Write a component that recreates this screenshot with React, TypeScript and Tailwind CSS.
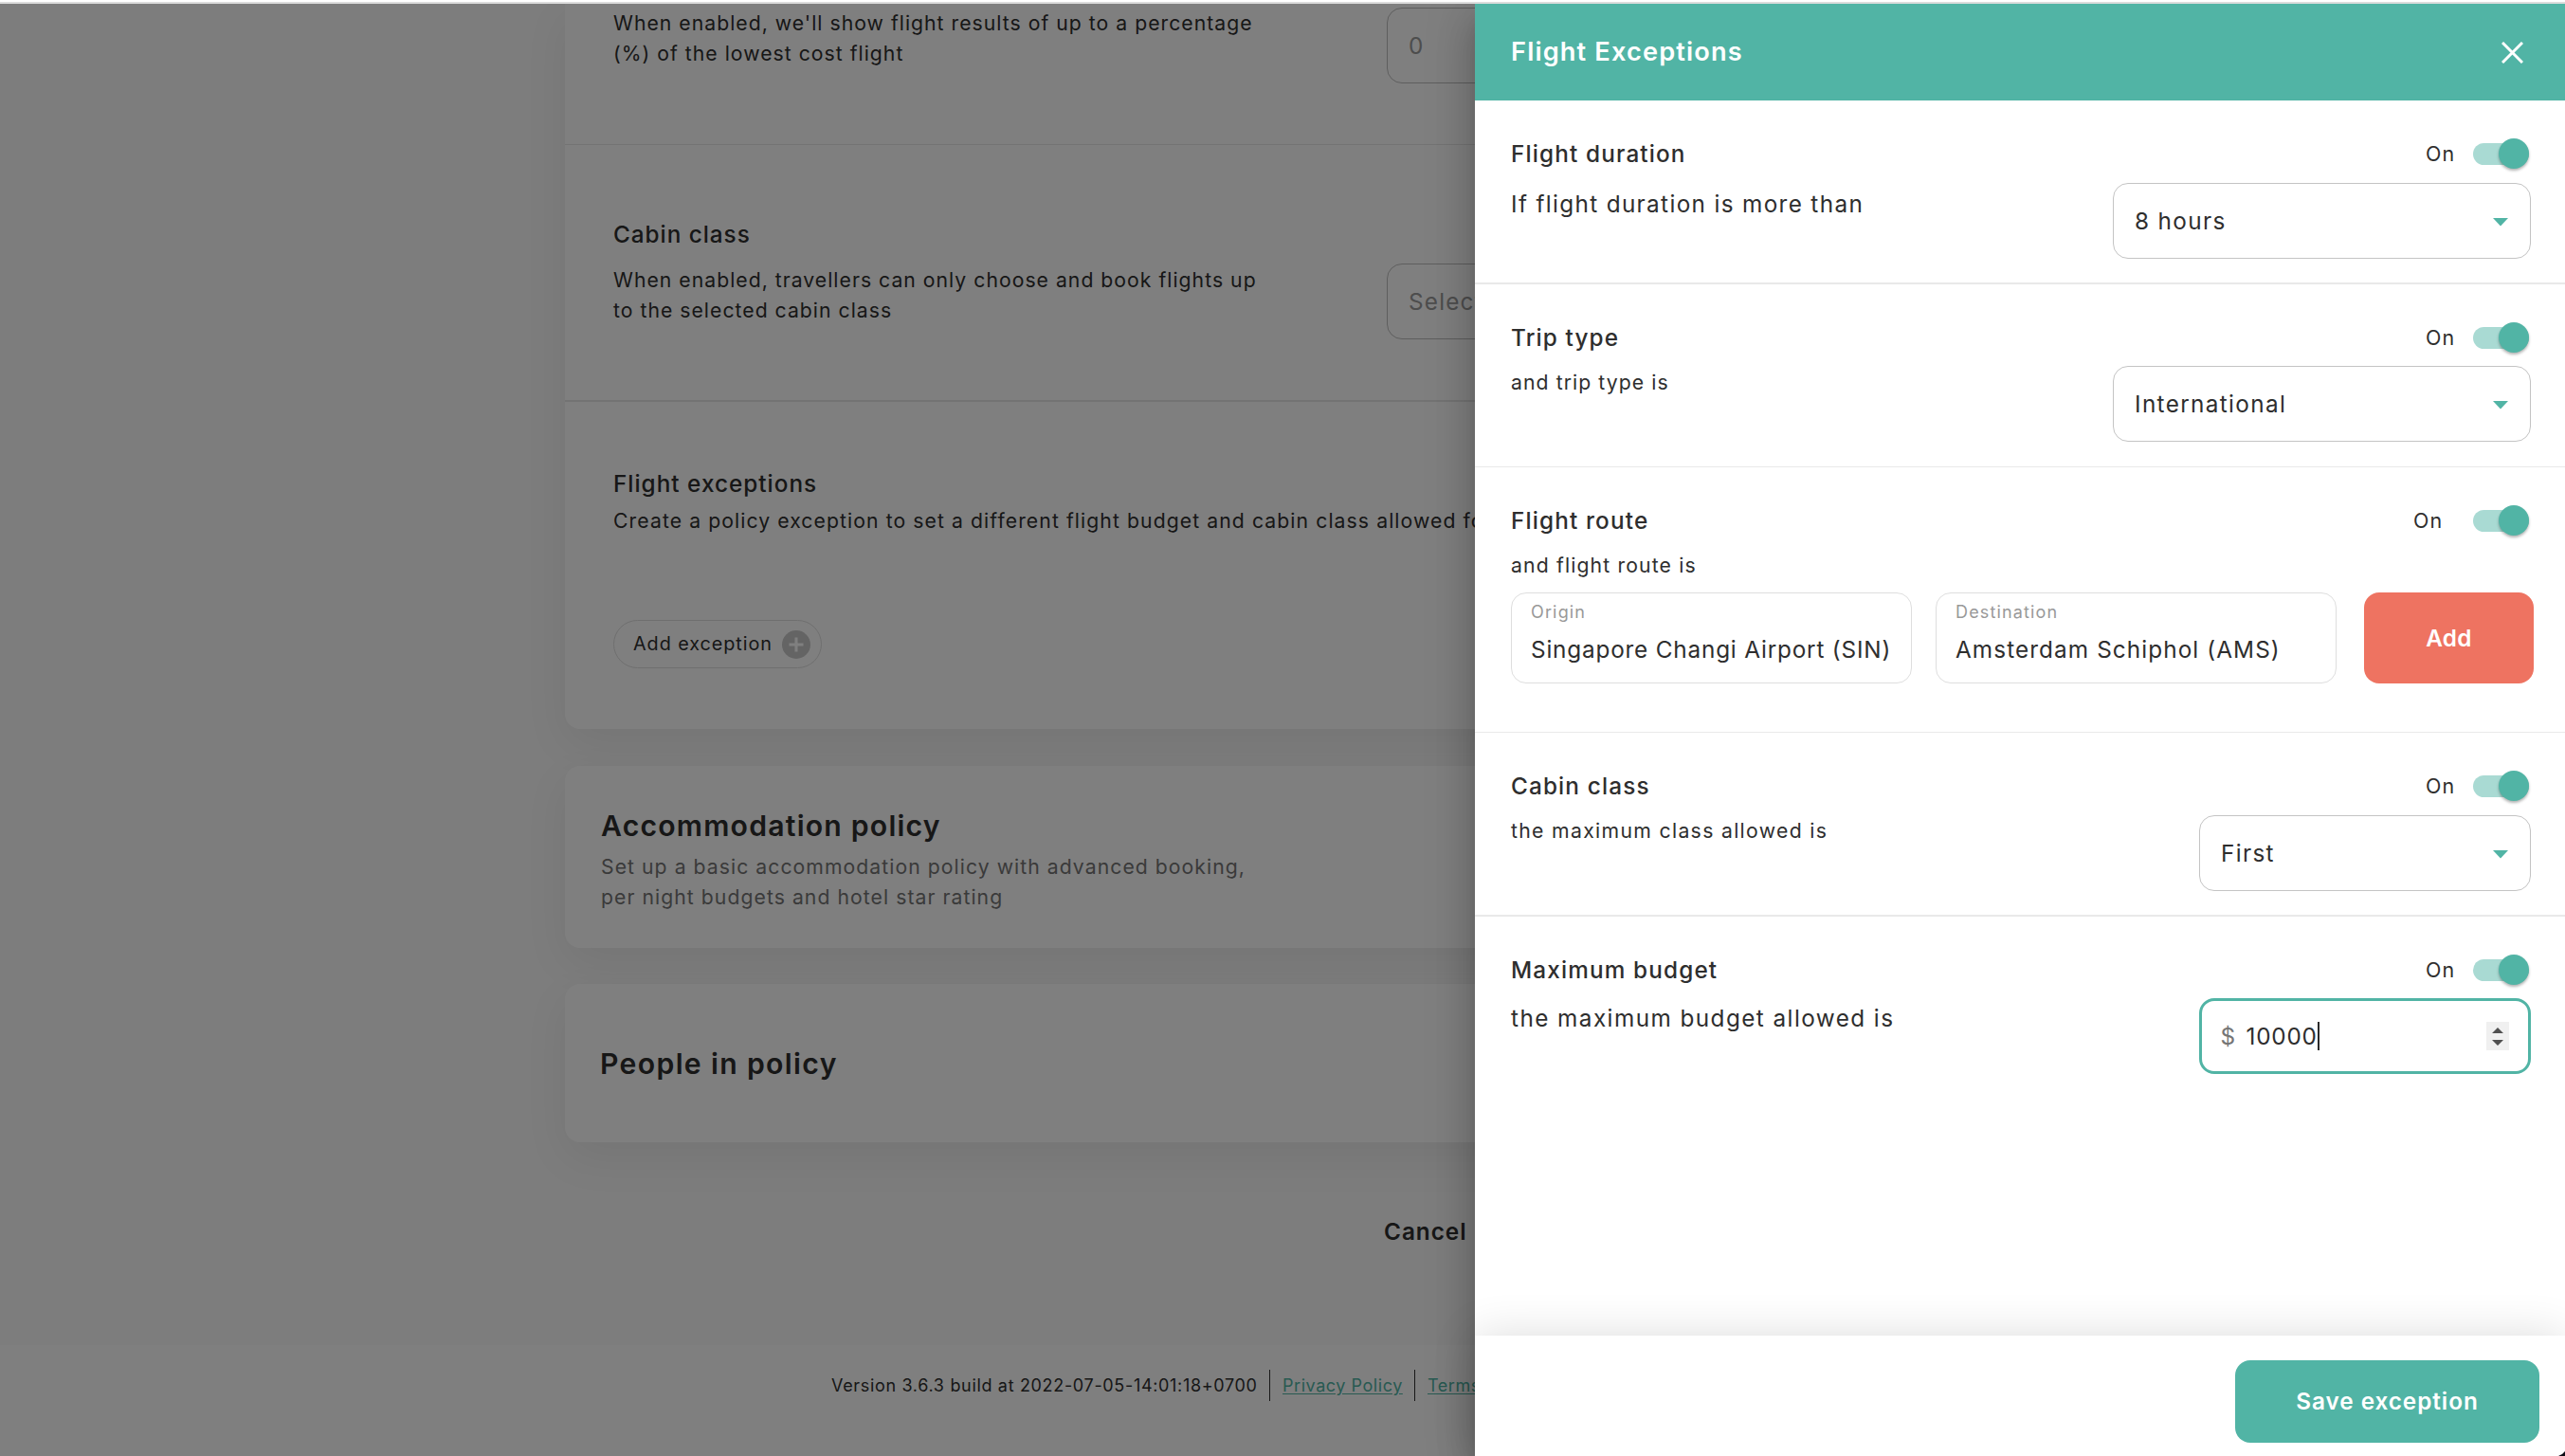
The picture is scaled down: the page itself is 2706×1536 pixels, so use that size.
import type { ReactNode } from 'react';

function Toggle({ wide = false }: { wide?: boolean }) {
  return (
    <div className="flex h-8 items-center pr-0.5">
      <span
        className={
          wide
            ? 'w-[63px] text-[21.4px] leading-8 tracking-[1.1px]'
            : 'w-[50px] text-[21.4px] leading-8 tracking-[1.1px]'
        }
      >
        On
      </span>
      <span className="flex h-[23px] w-[59px] items-center justify-end rounded-full bg-[#a9dad3]">
        <span className="size-8 shrink-0 rounded-full bg-[#51b4a5] shadow-[0_2px_3px_rgba(0,0,0,0.3)]" />
      </span>
    </div>
  );
}

function Select({ value, className }: { value: string; className: string }) {
  return (
    <div
      className={`flex h-20 items-center justify-between rounded-2xl border border-[#c4c4c4] pr-[23px] pl-[22px] ${className}`}
    >
      <span className="text-[24.3px] leading-8 tracking-[1.35px]">{value}</span>
      <svg className="mt-0.5 h-[9px] w-4" viewBox="0 0 16 9">
        <path d="M0 0h16L8 8.5z" fill="#51b4a5" />
      </svg>
    </div>
  );
}

function Place({ label, value, tracking }: { label: string; value: string; tracking: string }) {
  return (
    <div className="flex h-24 w-[423px] shrink-0 flex-col rounded-2xl border border-[#dedede] pt-2 pl-5 whitespace-nowrap">
      <span className="text-[18px] leading-6 tracking-[1.15px] text-[#999999]">{label}</span>
      <span className={`mt-[11px] text-[24.3px] leading-8 ${tracking}`}>{value}</span>
    </div>
  );
}

function Title({ children }: { children: ReactNode }) {
  return <h3 className="text-[24.3px] leading-8 font-medium tracking-[1.15px]">{children}</h3>;
}

function Card({ children, className }: { children: ReactNode; className: string }) {
  return (
    <section className={`bg-white shadow-[0_16px_48px_rgba(0,0,0,0.065)] ${className}`}>
      {children}
    </section>
  );
}

function PolicyPage() {
  return (
    <div className="flex h-full flex-col bg-[#fafafa] whitespace-nowrap">
      <main className="ml-[596px] flex h-[1415px] w-[1514px] shrink-0 flex-col">
        <Card className="flex h-[765px] shrink-0 flex-col rounded-b-2xl">
          <div className="flex h-[149px] justify-between border-b border-[#e6e6e6] pt-1 pr-12 pl-[51px]">
            <p className="text-[21.2px] leading-8 tracking-[1.02px]">
              When enabled, we&apos;ll show flight results of up to a percentage
              <br />
              (%) of the lowest cost flight
            </p>
            <div className="flex h-20 w-[599px] items-center rounded-2xl border border-[#bdbdbd] pl-[22px] text-[24.3px] text-[#9a9a9a]">
              0
            </div>
          </div>
          <div className="flex h-[271px] justify-between border-b-2 border-[#e6e6e6] pt-[78px] pr-12 pl-[51px]">
            <div>
              <h3 className="text-[24.3px] leading-8 font-medium tracking-[0.98px]">Cabin class</h3>
              <p className="mt-4 text-[21.2px] leading-8 tracking-[1.02px]">
                When enabled, travellers can only choose and book flights up
                <br />
                to the selected cabin class
              </p>
            </div>
            <div className="mt-[47px] flex h-20 w-[599px] items-center rounded-2xl border border-[#bdbdbd] pl-[22px] text-[24.3px] tracking-[1.2px] text-[#9a9a9a]">
              Select
            </div>
          </div>
          <div className="flex flex-col items-start pt-[70px] pl-[51px]">
            <h3 className="text-[24.3px] leading-8 font-medium tracking-[1.02px]">Flight exceptions</h3>
            <p className="mt-[7px] text-[21.2px] leading-8 tracking-[1.08px]">
              Create a policy exception to set a different flight budget and cabin class allowed for
            </p>
            <button className="mt-[89px] flex h-[51px] w-[220px] items-center justify-between rounded-full border border-[#dedede] pr-[11px] pl-5 text-[19.8px] tracking-[0.95px]">
              Add exception
              <svg className="size-[30px]" viewBox="0 0 30 30">
                <circle cx="15" cy="15" r="15" fill="#c8c8c8" />
                <path d="M15 7.5v15M7.5 15h15" stroke="#fff" strokeWidth="3" />
              </svg>
            </button>
          </div>
        </Card>
        <Card className="mt-[39px] h-48 shrink-0 rounded-2xl pt-[47px] pl-[38px]">
          <h2 className="text-[30.2px] leading-8 font-semibold tracking-[1.2px]">Accommodation policy</h2>
          <p className="mt-[11px] text-[21.2px] leading-8 tracking-[1.05px] text-[#757575]">
            Set up a basic accommodation policy with advanced booking,
            <br />
            per night budgets and hotel star rating
          </p>
        </Card>
        <Card className="mt-[38px] flex h-[167px] shrink-0 items-center rounded-2xl pl-[37px]">
          <h2 className="text-[30.2px] leading-8 font-semibold tracking-[1.33px]">People in policy</h2>
        </Card>
        <button className="mt-[78px] ml-[864px] w-fit text-[24.3px] leading-8 font-semibold tracking-[1px]">
          Cancel
        </button>
      </main>
      <footer className="flex h-[116px] shrink-0 items-start bg-white pt-[26px] pl-[877px] text-[18px] leading-[33px]">
        <span className="w-[462px] tracking-[0.67px]">Version 3.6.3 build at 2022-07-05-14:01:18+0700</span>
        <span className="w-[153px] border-l border-[#333] pl-[13px] tracking-[0.55px] text-[#51b4a5]">
          <span className="underline underline-offset-2">Privacy Policy</span>
        </span>
        <span className="border-l border-[#333] pl-[13px] tracking-[0.55px] text-[#51b4a5]">
          <span className="underline underline-offset-2">Terms</span>
        </span>
      </footer>
      <div className="h-px shrink-0 bg-white" />
    </div>
  );
}

function ExceptionDrawer() {
  return (
    <aside className="absolute inset-y-0 right-0 flex w-[1150px] flex-col bg-white whitespace-nowrap shadow-[0_13px_16px_-8px_rgba(0,0,0,0.2),0_26px_38px_3px_rgba(0,0,0,0.14),0_10px_48px_8px_rgba(0,0,0,0.12)]">
      <header className="flex h-[102px] shrink-0 items-center justify-between bg-[#51b4a5] pr-11 pl-[38px] text-white">
        <h2 className="text-[27.2px] leading-8 font-semibold tracking-[1.15px]">Flight Exceptions</h2>
        <svg className="size-[23px]" viewBox="0 0 23 23">
          <path d="M1 1l21 21M22 1L1 22" stroke="#fff" strokeWidth="3" />
        </svg>
      </header>

      <div className="flex grow flex-col">
        <section className="flex h-[194px] justify-between border-b-2 border-[#e9e9e9] pt-10 pr-9 pl-[38px]">
          <div>
            <Title>Flight duration</Title>
            <p className="mt-[21px] text-[24.3px] leading-8 tracking-[1.35px]">If flight duration is more than</p>
          </div>
          <div className="flex flex-col items-end">
            <Toggle />
            <Select value="8 hours" className="mt-[15px] w-[441px]" />
          </div>
        </section>

        <section className="flex h-[193px] justify-between border-b border-[#e9e9e9] pt-10 pr-9 pl-[38px]">
          <div>
            <Title>Trip type</Title>
            <p className="mt-[15px] text-[21.2px] leading-8 tracking-[1.08px]">and trip type is</p>
          </div>
          <div className="flex flex-col items-end">
            <Toggle />
            <Select value="International" className="mt-3.5 w-[441px]" />
          </div>
        </section>

        <section className="flex h-[280px] flex-col border-b border-[#e9e9e9] pt-10 pr-9 pl-[38px]">
          <div className="flex justify-between">
            <Title>Flight route</Title>
            <Toggle wide />
          </div>
          <p className="mt-[15px] text-[21.2px] leading-8 tracking-[1.14px]">and flight route is</p>
          <div className="mt-[13px] flex">
            <Place label="Origin" value="Singapore Changi Airport (SIN)" tracking="tracking-[0.82px]" />
            <div className="w-[25px] shrink-0" />
            <Place label="Destination" value="Amsterdam Schiphol (AMS)" tracking="tracking-[1.1px]" />
            <button className="ml-[29px] h-24 w-[179px] shrink-0 rounded-2xl bg-[#ee7361] text-[24.3px] font-semibold tracking-[0.3px] text-white">
              Add
            </button>
          </div>
        </section>

        <section className="flex h-[194px] justify-between border-b-2 border-[#e9e9e9] pt-10 pr-9 pl-[38px]">
          <div>
            <Title>Cabin class</Title>
            <p className="mt-[15px] text-[21.2px] leading-8 tracking-[1.33px]">the maximum class allowed is</p>
          </div>
          <div className="flex flex-col items-end">
            <Toggle />
            <Select value="First" className="mt-[15px] w-[350px]" />
          </div>
        </section>

        <section className="flex justify-between pt-10 pr-9 pl-[38px]">
          <div>
            <Title>Maximum budget</Title>
            <p className="mt-[19px] text-[24.3px] leading-8 tracking-[1.44px]">the maximum budget allowed is</p>
          </div>
          <div className="flex flex-col items-end">
            <Toggle />
            <div className="mt-3.5 flex h-20 w-[350px] items-center rounded-2xl border-3 border-[#51b4a5] pr-5 pl-[19.5px] text-[24.3px] leading-8">
              <span className="w-[27px] text-[#757575]">$</span>
              <span className="tracking-[0.8px]">10000</span>
              <span className="h-[30px] w-0.5 bg-[#2b2b2b]" />
              <span className="ml-auto flex h-[30px] w-6 items-center justify-center bg-[#f0f0f0]">
                <svg className="h-[19px] w-3" viewBox="0 0 12 19">
                  <path d="M0 6L6 0l6 6zM0 13h12l-6 6z" fill="#505050" />
                </svg>
              </span>
            </div>
          </div>
        </section>
      </div>

      <footer className="flex h-[127px] shrink-0 justify-end bg-white pt-[26px] pr-[27px] shadow-[0_0_48px_rgba(0,0,0,0.14)]">
        <button className="h-[87px] w-[321px] rounded-2xl bg-[#51b4a5] text-[24.3px] font-semibold tracking-[0.95px] text-white">
          Save exception
        </button>
      </footer>
      <svg className="absolute right-0 bottom-0 h-[5px] w-[7px]" viewBox="0 0 7 5">
        <path d="M7 0Q4.5 3.5 0 5h7z" fill="#0b0b14" />
      </svg>
    </aside>
  );
}

export default function App() {
  return (
    <div className="flex h-[1536px] w-[2706px] flex-col overflow-hidden bg-white font-['Inter',sans-serif] text-[#2e2e2e]">
      <div className="h-1 shrink-0 border-b-2 border-[#dcdcdc] bg-white" />
      <div className="relative h-[1532px] shrink-0 overflow-hidden">
        <PolicyPage />
        <div className="absolute inset-0 bg-black/50" />
        <ExceptionDrawer />
      </div>
    </div>
  );
}
